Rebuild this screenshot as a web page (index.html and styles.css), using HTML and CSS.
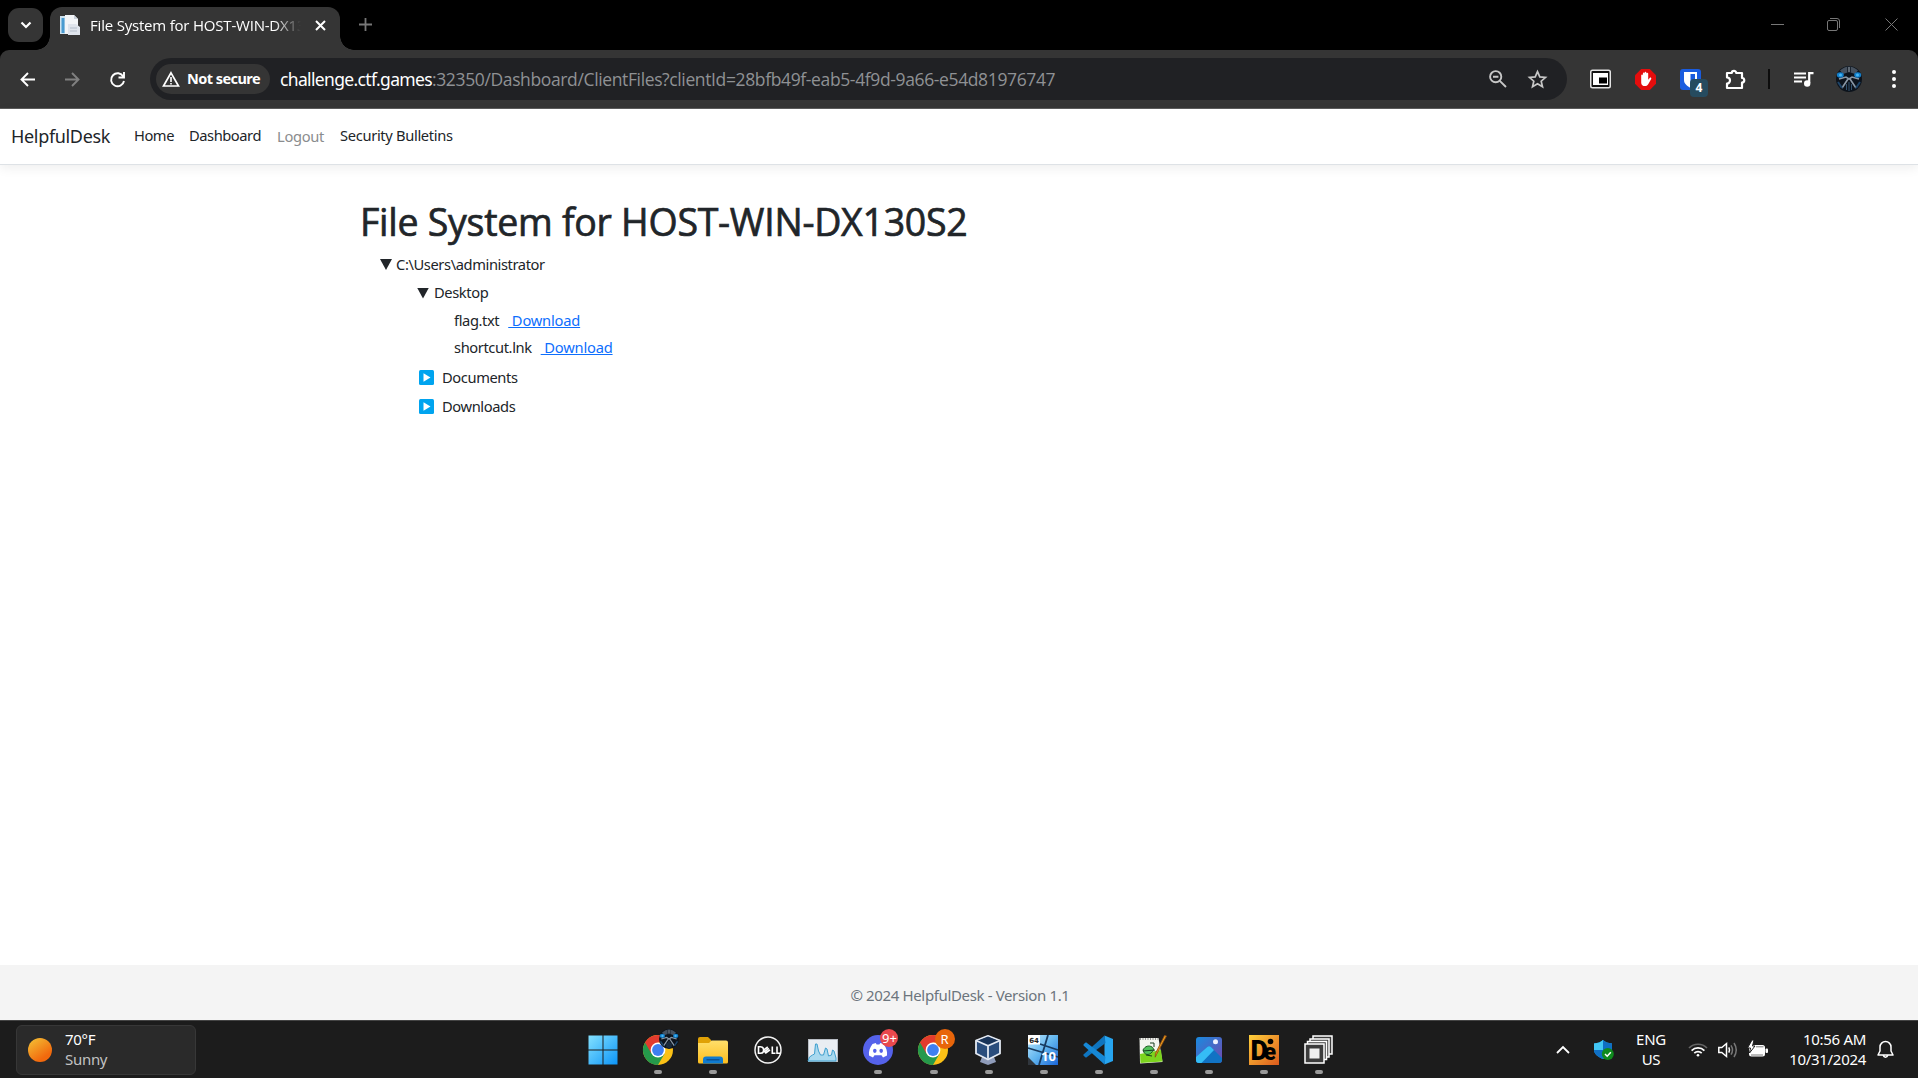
FILE: index.html
```html
<!DOCTYPE html>
<html lang="en">
<head>
<meta charset="utf-8">
<title>File System for HOST-WIN-DX130S2</title>
<link rel="stylesheet" href="styles.css">
</head>
<body>
<header class="tabstrip">
  <button class="tab-search"><svg width="12" height="8" viewBox="0 0 12 8"><path d="M1.500 1.500 6 6l4.500-4.500" fill="none" stroke="#fff" stroke-width="2.200"/></svg></button>
  <div class="tab">
    <svg class="favicon" width="20" height="20" viewBox="0 0 20 20"><path d="M0 1h5v18H0z" fill="#cfe3ef"/><path d="M1.500 3h3v15h-3z" fill="#4a9bd0"/><path d="M5 0h9l4 4v15H5z" fill="#f3f5f8"/><path d="M14 0l4 4h-4z" fill="#c8d0da"/><path d="M8 9h8l4 3v8H8z" fill="#dfe4ec"/><path d="M10 13h7M10 16h7" stroke="#b3bdca"/></svg>
    <span class="tab-title">File System for HOST-WIN-DX130S2</span>
    <svg class="tab-close" width="11" height="11" viewBox="0 0 11 11"><path d="M1 1l9 9M10 1l-9 9" stroke="#fff" stroke-width="2"/></svg>
  </div>
  <svg class="new-tab" width="13" height="13" viewBox="0 0 13 13"><path d="M6.500 0v13M0 6.500h13" stroke="#777" stroke-width="1.800"/></svg>
  <div class="window-controls">
    <svg width="13" height="13" viewBox="0 0 13 13"><path d="M0 6.500h13" stroke="#777"/></svg>
    <svg width="13" height="13" viewBox="0 0 13 13" fill="none" stroke="#777"><rect x=".5" y="2.500" width="10" height="10" rx="1.500"/><path d="M3 .5h7a2.500 2.500 0 0 1 2.500 2.500v7"/></svg>
    <svg width="13" height="13" viewBox="0 0 13 13"><path d="M.5.5l12 12M12.500.5l-12 12" stroke="#777"/></svg>
  </div>
</header>
<div class="toolbar">
  <div class="nav-buttons">
    <svg width="15" height="15" viewBox="0 0 15 15" fill="none" stroke="#fff" stroke-width="1.900"><path d="M15 7.500H1.500M8 1L1.500 7.500 8 14"/></svg>
    <svg width="15" height="15" viewBox="0 0 15 15" fill="none" stroke="#808080" stroke-width="1.900"><path d="M0 7.500h13.500M7 1l6.500 6.500L7 14"/></svg>
    <svg width="15" height="15" viewBox="0 0 15 15" fill="none" stroke="#fff" stroke-width="1.900"><path d="M13.300 4.600A6.500 6.500 0 1 0 14 9M14 0v5.500H8.500"/></svg>
  </div>
  <div class="omnibox">
    <div class="security-chip">
      <svg width="18" height="16" viewBox="0 0 18 16"><path d="M9 1.800L16.500 15h-15z" fill="none" stroke="#fff" stroke-width="1.700"/><path d="M9 6v5M9 12v1.600" stroke="#fff" stroke-width="1.600"/></svg>
      <span class="chip-text">Not secure</span>
    </div>
    <span class="url-host">challenge.ctf.games</span><span class="url-path">:32350/Dashboard/ClientFiles?clientId=28bfb49f-eab5-4f9d-9a66-e54d81976747</span>
    <div class="omnibox-actions">
      <svg width="18" height="18" viewBox="0 0 18 18" fill="none" stroke="#c7c7c7" stroke-width="1.900"><circle cx="6.700" cy="6.700" r="5.600"/><path d="M10.800 10.800L17 17M4 6.700h5.400"/></svg>
      <svg width="19" height="18" viewBox="0 0 19 18"><path d="M9.500 1.600l2.300 5.300 5.700.5-4.300 3.800 1.300 5.600-5-3-5 3 1.300-5.600L1.500 7.400l5.700-.5z" fill="none" stroke="#c7c7c7" stroke-width="1.700"/></svg>
    </div>
  </div>
  <div class="extensions">
    <svg width="21" height="20" viewBox="0 0 21 20"><rect x="0" y="0.500" width="21" height="19" rx="2.500" fill="#e4e4e4"/><rect x="1.500" y="2" width="18" height="16" rx="1" fill="#111"/><rect x="3" y="4" width="15" height="12" fill="#fff"/><rect x="9" y="8.500" width="8" height="6" fill="#000"/></svg>
    <svg width="21" height="21" viewBox="0 0 21 21"><path d="M6.200 0h8.600L21 6.200v8.600L14.800 21H6.200L0 14.800V6.200z" fill="#e40d0d"/><path d="M6.200 6.500c0-1.200 1.700-1.200 1.700 0V4.500c0-1.200 1.700-1.200 1.700 0V3.700c0-1.200 1.800-1.200 1.800 0v.9c0-1.200 1.800-1.200 1.800 0v6.200l1.500-1.900c.8-.8 2 0 1.500 1l-3 5.300c-1.500 2.800-7 2.500-7-1.500z" fill="#fff"/></svg>
    <div class="vault">
      <svg width="21" height="21" viewBox="0 0 21 21"><rect width="21" height="21" rx="3" fill="#1a5cdf"/><path d="M4 3h13v8c0 4-3.500 6.300-6.500 8C7.500 17.300 4 15 4 11z" fill="#fff"/><path d="M10.500 5H15v6c0 2.500-2.200 4.300-4.500 5.700z" fill="#1a5cdf"/></svg>
      <span class="vault-count">4</span>
    </div>
    <svg class="puzzle" width="21" height="21" viewBox="0 0 21 21"><path d="M2 4h4.800a2 2 0 0 1 4.400 0H17v5a2 2 0 0 1 0 4.500V19H2v-4.500a2.800 2.800 0 0 0 0-6z" fill="none" stroke="#fff" stroke-width="2.200" stroke-linejoin="round"/></svg>
    <i class="divider"></i>
    <svg class="media" width="20" height="15" viewBox="0 0 20 15"><path d="M0 1.500h12M0 5.500h12M0 9.500h8" stroke="#fff" stroke-width="2"/><path d="M15.200 11V1.200H19.500" fill="none" stroke="#fff" stroke-width="2.200"/><circle cx="13.200" cy="11.500" r="3.200" fill="#fff"/></svg>
    <svg class="avatar" width="26" height="26" viewBox="0 0 26 26"><use href="#pilot"/></svg>
    <svg class="more" width="4" height="18" viewBox="0 0 4 18" fill="#fff"><circle cx="2" cy="2" r="2"/><circle cx="2" cy="9" r="2"/><circle cx="2" cy="16" r="2"/></svg>
  </div>
</div>
<nav class="site-nav">
  <a class="brand">HelpfulDesk</a>
  <a class="link home">Home</a>
  <a class="link dash">Dashboard</a>
  <a class="link logout">Logout</a>
  <a class="link bulletins">Security Bulletins</a>
</nav>
<main>
  <h1>File System for HOST-WIN-DX130S2</h1>
  <ul class="tree">
    <li class="row root"><i class="open"></i><span>C:\Users\administrator</span></li>
    <li class="row folder"><i class="open"></i><span>Desktop</span></li>
    <li class="row file"><span>flag.txt</span><a class="download">&nbsp;Download</a></li>
    <li class="row file last"><span>shortcut.lnk</span><a class="download">&nbsp;Download</a></li>
    <li class="row closed"><svg width="15" height="15" viewBox="0 0 15 15"><rect width="15" height="15" rx="1.500" fill="#00a4ef"/><path d="M4.500 3.200v8.600L11.500 7.500z" fill="#fff"/></svg><span>Documents</span></li>
    <li class="row closed"><svg width="15" height="15" viewBox="0 0 15 15"><rect width="15" height="15" rx="1.500" fill="#00a4ef"/><path d="M4.500 3.200v8.600L11.500 7.500z" fill="#fff"/></svg><span>Downloads</span></li>
  </ul>
</main>
<footer class="site-footer">© 2024 HelpfulDesk - Version 1.1</footer>
<div class="taskbar">
  <div class="weather">
    <i class="sun"></i>
    <div class="weather-text"><span>70°F</span><span class="sky">Sunny</span></div>
  </div>
  <div class="apps">
    <div class="app"><svg width="30" height="30" viewBox="0 0 30 30" fill="url(#win)"><path d="M.5.5h14v14H.5zM15.500.5h14v14h-14zM.5 15.500h14v14H.5zM15.500 15.500h14v14h-14z"/></svg></div>
    <div class="app running"><svg width="30" height="30" viewBox="0 0 30 30"><use href="#chrome"/></svg><svg class="badge" width="20" height="20" viewBox="0 0 26 26"><use href="#pilot"/></svg></div>
    <div class="app running"><svg width="30" height="30" viewBox="0 0 30 30"><path d="M0 4a2 2 0 0 1 2-2h8l3 3v6H0z" fill="#e0a106"/><path d="M0 8l11 0 2.500-2.500H28a2 2 0 0 1 2 2V27a1.500 1.500 0 0 1-1.500 1.500h-27A1.500 1.500 0 0 1 0 27z" fill="url(#folder)"/><path d="M5 28.500v-4a3 3 0 0 1 3-3h14a3 3 0 0 1 3 3v4z" fill="#0f7bd0"/><path d="M8.500 24.800h13" stroke="#0a4a86" stroke-width="1.200"/></svg></div>
    <div class="app"><svg width="30" height="30" viewBox="0 0 30 30"><circle cx="15" cy="15" r="13" fill="none" stroke="#f2f2f2" stroke-width="1.500"/><g fill="none" stroke="#fff" stroke-width="1.600"><path d="M5.500 11.700v6.600h1.800a3.300 3.300 0 0 0 0-6.600zM19.300 11.500v6.800h3.200M24 11.500v6.800h3"/><path d="M10.500 15.200l4.300-3.200M11.600 16.600l4.300-3.200M12.600 18l4.400-3.200M10.500 15l2.500 3.200"/></g></svg></div>
    <div class="app"><svg width="30" height="24" viewBox="0 0 30 24"><rect x=".5" y="1.500" width="29" height="22" fill="#e9edf2" stroke="#b9bec5"/><path d="M1.500 19l3-2 2-1 1-10 1.500 0 1.500 7 2 4 3 0 2-7 1.500 1 1.500 7 3-1 1-5 1.500 1 2 7v3h-28z" fill="#a9d9ef" stroke="#3f9fce"/></svg></div>
    <div class="app running"><svg width="30" height="30" viewBox="0 0 30 30"><circle cx="15" cy="15" r="15" fill="#5562ea"/><path d="M9.500 9l3.300-1 .8 1.500h2.800l.8-1.500 3.300 1c2.800 3.500 4 7.500 3.500 11.500l-4 2-1.500-2.300h-7L10 22.500l-4-2C5.500 16.500 6.800 12.500 9.500 9z" fill="#fff"/><ellipse cx="11.800" cy="15.800" rx="1.800" ry="2.100" fill="#5562ea"/><ellipse cx="18.200" cy="15.800" rx="1.800" ry="2.100" fill="#5562ea"/></svg><span class="badge count">9+</span></div>
    <div class="app running"><svg width="30" height="30" viewBox="0 0 30 30"><use href="#chrome"/></svg><span class="badge profile">R</span></div>
    <div class="app running"><svg width="26" height="30" viewBox="0 0 26 30"><path d="M7 22h12l2 5-8 3-8-3z" fill="#8f9cba"/><path d="M13 .8L25 5.500V18.500L13 24.500 1 18.500V5.500z" fill="#2a4d7c" stroke="#e3e9f2" stroke-width="1.800" stroke-linejoin="round"/><path d="M2 6l11 5 11-5L13 1.500z" fill="#183358"/><path d="M1 5.500l12 5.300 12-5.300M13 10.800v13" fill="none" stroke="#e3e9f2" stroke-width="1.800"/></svg></div>
    <div class="app running"><svg width="30" height="30" viewBox="0 0 30 30"><rect width="30" height="30" fill="url(#glass)"/><path d="M0 13L30 22M20 0L11 30M12 9l18 6" stroke="#183b60" stroke-width="1.800"/><path d="M0 22l8 8H0z" fill="#30363d"/><rect width="12" height="9.500" fill="#fff"/><text x="1.200" y="8" class="vm-bits">64</text><text x="13" y="25.500" class="vm-ver">10</text></svg></div>
    <div class="app running"><svg width="30" height="30" viewBox="0 0 30 30"><path d="M21.500.5L30 4v22l-8.500 3.500z" fill="#27a5f0"/><path d="M21.500.5L.8 19.200a1.300 1.300 0 0 0 0 1.800l2.200 1.800L22.500 8z" fill="#0f75bf"/><path d="M21.500 29.500L.8 10.800a1.300 1.300 0 0 1 0-1.800L3 7.200 22.500 22z" fill="#1688d6"/></svg></div>
    <div class="app running"><svg width="30" height="30" viewBox="0 0 30 30"><path d="M1.500 3h19l4 24-22.500 1.500z" fill="#f4f6ef"/><path d="M2 19l21-4 1.500 11.500L2.500 28z" fill="#7cd41e"/><path d="M2 4h18" stroke="#999" stroke-width="2" stroke-dasharray="1 1.500"/><path d="M5 15c2-4 6-5 9-3 2 1 2 4 0 5-3 4-8 3-9-2z" fill="#52c25a" stroke="#1d5a22"/><path d="M5 16l12-1M12 8h4v4M8 20l6 1" stroke="#173d1c" fill="none"/><path d="M28.500 1L18.500 19.500l-1.300 2.700.2-3.600L26.500.500z" fill="#e99b1c" stroke="#8c4a13" stroke-width=".8"/></svg></div>
    <div class="app running"><svg width="26" height="26" viewBox="0 0 26 26"><rect width="26" height="26" rx="3" fill="url(#photo)"/><path d="M0 21L11 10.300a3 3 0 0 1 4.200 0L26 21v2a3 3 0 0 1-3 3H3a3 3 0 0 1-3-3z" fill="#1173c4"/><path d="M0 20L11 10.200a3 3 0 0 1 4.200 0L18 13 5.500 26H3a3 3 0 0 1-3-3z" fill="#35bdf5"/><circle cx="19.500" cy="4.800" r="2.500" fill="#eef2ff"/></svg></div>
    <div class="app running"><svg width="30" height="30" viewBox="0 0 30 30"><rect width="30" height="30" fill="url(#de)"/><text x="1.500" y="25" class="de-big">D</text><text x="14.500" y="25" class="de-small">e</text><circle cx="21.500" cy="6.500" r="2.800"/></svg></div>
    <div class="app running"><svg width="30" height="30" viewBox="0 0 30 30" fill="#3c3c3c" stroke="#fff" stroke-width="1.500"><rect x="9" y="1" width="19" height="18"/><rect x="6" y="4" width="19" height="18"/><rect x="3.500" y="6.500" width="19" height="18"/><rect x="1" y="9" width="19" height="19"/><rect x="5.500" y="13.500" width="10" height="10" fill="#f0f0f0" stroke="none"/></svg></div>
  </div>
  <div class="tray">
    <svg width="14" height="9" viewBox="0 0 14 9"><path d="M1 8l6-6 6 6" fill="none" stroke="#fff" stroke-width="1.800"/></svg>
    <svg class="shield" width="20" height="20" viewBox="0 0 20 20"><path d="M0 3.500Q6 3 9 0q3 3 9 3.500V10c0 4-4 7-9 9-5-2-9-5-9-9z" fill="#1fa3e6"/><path d="M0 10h9v9c-5-2-9-5-9-9zM9 0q3 3 9 3.500V10H9z" fill="#0f6fc4"/><path d="M0 3.500Q6 3 9 0v10H0z" fill="#42c6f4"/><circle cx="13.800" cy="14" r="6" fill="#0f8a1d"/><path d="M11 14l2.200 2.200 3.600-4" fill="none" stroke="#fff" stroke-width="1.500"/></svg>
    <div class="lang"><span>ENG</span><span>US</span></div>
    <div class="status">
      <svg width="20" height="15" viewBox="0 0 20 15" fill="none" stroke="#fff" stroke-width="1.700"><path d="M1 6a12.700 12.700 0 0 1 18 0" stroke="#666"/><path d="M3.600 8.600a9 9 0 0 1 12.800 0M6.300 11.200a5.200 5.200 0 0 1 7.400 0"/><circle cx="10" cy="13.200" r="1.300" fill="#fff" stroke="none"/></svg>
      <svg width="20" height="16" viewBox="0 0 20 16" fill="none" stroke="#fff" stroke-width="1.500"><path d="M.8 5.500v5h3L8.500 14.500v-13L3.800 5.500z"/><path d="M10.800 5.300q1.500 2.700 0 5.400"/><path d="M13 3.300q3 4.700 0 9.400M16 1q4.500 7 0 14" stroke="#777"/></svg>
      <svg width="20" height="17" viewBox="0 0 20 17"><rect x="1" y="4" width="16" height="11.500" rx="2.500" fill="#fff"/><rect x="17.500" y="7.500" width="2.500" height="4.500" rx="1" fill="#fff"/><path d="M4-1L-.5 7h3L1.500 12 7 5H4.500L6-1z" fill="#fff" stroke="#1c1c1c"/><path d="M8 5.800h7.500M3 14h12" stroke="#1c1c1c" stroke-width=".6"/></svg>
    </div>
    <div class="clock"><span>10:56 AM</span><span>10/31/2024</span></div>
    <svg class="bell" width="17" height="19" viewBox="0 0 17 19" fill="none" stroke="#fff" stroke-width="1.500"><path d="M3 11V7a5.500 5.500 0 0 1 11 0v4l2 4H1zM6.300 15.500a2.300 2.300 0 0 0 4.400 0" stroke-linejoin="round"/></svg>
  </div>
</div>
<svg class="defs" width="0" height="0">
  <defs>
    <linearGradient id="win" x1="0" y1="0" x2="30" y2="30" gradientUnits="userSpaceOnUse"><stop offset="0" stop-color="#86e3ff"/><stop offset="1" stop-color="#0a93f7"/></linearGradient>
    <linearGradient id="folder" x1="0" y1="0" x2="0" y2="1"><stop offset="0" stop-color="#ffdf6b"/><stop offset="1" stop-color="#fcbd1e"/></linearGradient>
    <linearGradient id="glass" x1="0" y1="0" x2="1" y2="1"><stop offset="0" stop-color="#c3e9ff"/><stop offset=".5" stop-color="#62b6ef"/><stop offset="1" stop-color="#1b66d8"/></linearGradient>
    <linearGradient id="photo" x1="0" y1="0" x2="1" y2="1"><stop offset="0" stop-color="#188be0"/><stop offset="1" stop-color="#7448ae"/></linearGradient>
    <linearGradient id="de" x1="0" y1="0" x2="1" y2="1"><stop offset="0" stop-color="#ffd13b"/><stop offset="1" stop-color="#dc5a1d"/></linearGradient>
    <g id="chrome"><circle cx="15" cy="15" r="15" fill="#fbc116"/><path d="M2 7.500A15 15 0 0 0 15 30L21.500 18.800 15 15z" fill="#25994b"/><path d="M2 7.500A15 15 0 0 1 28 7.500H15L8.500 18.800z" fill="#e33b2e"/><circle cx="15" cy="15" r="7.400" fill="#fff"/><circle cx="15" cy="15" r="5.900" fill="#3f7ff0"/></g>
    <g id="pilot"><circle cx="13" cy="13" r="13" fill="#0c131c"/><path d="M4 4.500Q13-3.500 22 4.500L19 8 13 6 7 8z" fill="#47525f"/><path d="M11 0h4v7h-4z" fill="#1b242f"/><path d="M13 1v5" stroke="#a5b0bb"/><path d="M3 13l7-2 3 2 3-2 7 2M12 13L6 22M14 13l6 9" fill="none" stroke="#8b98a6" stroke-width="1.600"/><path d="M10.500 18v6M13 16v9M15.500 18v6" stroke="#31506c"/><path d="M2 16l4 6M24 16l-4 6" stroke="#1d4468" stroke-width="2"/><ellipse cx="4.300" cy="9" rx="3.500" ry="2.700" fill="#147ec9"/><ellipse cx="21.700" cy="9" rx="3.500" ry="2.700" fill="#147ec9"/><circle cx="4.500" cy="9" r="1.500" fill="#45b7f4"/><circle cx="21.500" cy="9" r="1.500" fill="#45b7f4"/></g>
  </defs>
</svg>
</body>
</html>
```
FILE: styles.css
```css
* { box-sizing: border-box; }
body { margin: 0; width: 1918px; height: 1078px; overflow: hidden; display: flex; flex-direction: column; background: linear-gradient(#000 70px, #fff 70px); color: #212529; font-family: "Noto Sans", "Open Sans", sans-serif; font-size: 15px; }
svg { display: block; flex: none; overflow: visible; }
span, a { white-space: nowrap; }
.defs { position: absolute; }

.tabstrip { height: 50px; flex: none; background: #000; display: flex; align-items: flex-start; padding-left: 8px; }
.tab-search { width: 35px; height: 34px; margin: 8px 7px 0 0; padding: 0; border: 0; border-radius: 11px; background: #353535; display: flex; align-items: center; justify-content: center; }
.tab { position: relative; width: 290px; height: 43px; margin-top: 7px; background: #353535; border-radius: 12px 12px 0 0; display: flex; align-items: center; padding: 0 10px 7px; }
.tab::before, .tab::after { content: ""; position: absolute; bottom: 0; width: 14px; height: 14px; }
.tab::before { left: -14px; background: radial-gradient(circle at 0 0, transparent 13.500px, #353535 14px); }
.tab::after { right: -14px; background: radial-gradient(circle at 100% 0, transparent 13.500px, #353535 14px); }
.tab-title { width: 211px; margin: -1px 0 0 10px; overflow: hidden; color: #fff; font: 15px/20px "Open Sans", sans-serif; letter-spacing: -.2px; -webkit-mask-image: linear-gradient(90deg, #000 184px, transparent 211px); mask-image: linear-gradient(90deg, #000 184px, transparent 211px); }
.tab-close { margin-left: 14px; }
.new-tab { margin: 18px 0 0 19px; }
.window-controls { margin: 18px 20px 0 auto; display: flex; gap: 43px; }
.window-controls svg:last-child { margin-left: 2px; }

.toolbar { height: 59px; flex: none; background: #353535; border-bottom: 1px solid #5c5c5c; border-radius: 9px 9px 0 0; display: flex; align-items: center; padding-left: 20px; }
.nav-buttons { display: flex; gap: 30px; margin-right: 25px; }
.omnibox { flex: none; width: 1417px; height: 42px; border-radius: 21px; background: #202124; display: flex; align-items: center; padding-left: 6px; }
.security-chip { width: 114px; height: 30px; border-radius: 15px; background: #353535; display: flex; align-items: center; gap: 7px; padding-left: 6px; margin-right: 10px; }
.chip-text { color: #fff; font-size: 14.500px; font-weight: 700; line-height: 20px; letter-spacing: -.56px; margin-top: -2px; }
.url-host { color: #fff; font-size: 17.500px; line-height: 24px; letter-spacing: -.65px; }
.url-path { color: #8f9194; font: 17.500px/24px "Open Sans", sans-serif; letter-spacing: -.37px; }
.omnibox-actions { margin: 0 20px 0 auto; display: flex; gap: 21px; }
.extensions { flex: 1; display: flex; align-items: center; padding-left: 23px; }
.extensions > * { margin-right: 24px; }
.vault { position: relative; }
.vault-count { position: absolute; left: 10px; top: 10px; width: 18px; height: 18px; border-radius: 4px; background: #264b5f; color: #fff; font: 700 12px/18px "Noto Sans", sans-serif; text-align: center; }
.extensions .puzzle { margin-right: 23px; }
.divider { width: 2px; height: 20px; background: #0c0c0c; margin-left: -1px; }
.extensions .media { margin-right: 22px; }
.extensions .avatar { margin-right: 30px; }
.extensions .more { margin-right: 0; }

.site-nav { height: 56px; flex: none; background: #fff; border-bottom: 1px solid #dee2e6; box-shadow: 0 3px 11px rgba(0,0,0,.07); display: flex; align-items: center; padding-left: 11px; }
.brand { font-size: 18px; line-height: 24px; width: 123px; letter-spacing: -.33px; margin-top: -2px; }
.link { font-size: 14.700px; line-height: 20px; margin-top: -4px; letter-spacing: -.45px; }
.home { width: 55px; }
.dash { width: 88px; }
.logout { width: 63px; color: #8a8c8e; margin-top: -2px; letter-spacing: -.3px; }
.bulletins { letter-spacing: -.33px; }

main { flex: 1; padding: 34px 0 0 360px; }
h1 { margin: 0; height: 50px; font: 500 37.500px/45px "Open Sans", sans-serif; letter-spacing: -.27px; -webkit-text-stroke: .7px #212529; }
.tree { list-style: none; margin: 0; padding: 0; font-size: 14.700px; letter-spacing: -.4px; }
.row { height: 29px; display: flex; align-items: center; line-height: 20px; }
.root { padding-left: 20px; }
.folder { height: 28px; padding-left: 57px; }
.file { padding-left: 94px; height: 27px; }
.last { margin-bottom: 2px; }
.closed { padding-left: 59px; gap: 8px; }
.closed svg { margin-top: 2px; }
.open { width: 12px; height: 11px; margin: 2px 4px 0 0; background: #212529; clip-path: polygon(0 0, 100% 0, 50% 100%); }
.folder .open { margin-right: 5px; }
.download { color: #0d6efd; text-decoration: underline; margin-left: 9px; letter-spacing: -.2px; }
.site-footer { height: 55px; flex: none; background: #f4f4f4; color: #6c757d; text-align: center; padding: 20px 0 0 2px; line-height: 20px; letter-spacing: -.36px; }

.taskbar { height: 58px; flex: none; background: #1c1c1c; border-top: 1px solid #444; display: grid; grid-template-columns: 574px 770px 1fr; color: #fff; }
.weather { width: 180px; height: 50px; margin: 4px 0 0 16px; border: 1px solid #373737; border-radius: 6px; background: #2a2a2a; display: flex; align-items: center; padding-left: 11px; gap: 13px; }
.sun { width: 24px; height: 24px; border-radius: 50%; background: linear-gradient(145deg, #f3c537, #f2690d 75%); }
.weather-text, .lang, .clock { display: flex; flex-direction: column; line-height: 20px; letter-spacing: -.3px; margin-top: -2px; }
.sky { color: #c2c2c2; }
.apps { display: flex; padding-left: 1px; }
.app { flex: none; position: relative; width: 55.100px; height: 57px; display: flex; align-items: center; justify-content: center; }
.running::after { content: ""; position: absolute; left: 24px; top: 49px; width: 8px; height: 4px; border-radius: 2px; background: #9a9a9a; }
.badge { position: absolute; left: 29px; top: 8px; width: 20px; height: 20px; border-radius: 50%; color: #fff; text-align: center; font: 13px/20px "Noto Sans", sans-serif; }
.count { left: 30px; width: 18px; height: 18px; line-height: 18px; background: #e9484d; }
.profile { background: #e8650a; }
.vm-bits { font: 700 7px "DejaVu Sans", sans-serif; fill: #222; }
.vm-ver { font: 700 13px "Noto Sans", sans-serif; fill: #fff; }
.de-big { font: 900 27px Roboto, sans-serif; }
.de-small { font: 900 23px Roboto, sans-serif; }
.tray { display: flex; align-items: center; padding-left: 212px; }
.shield { margin-left: 24px; }
.lang { width: 30px; margin-left: 22px; align-items: center; }
.status { display: flex; gap: 10px; align-items: center; margin-left: 22px; }
.clock { width: 98px; align-items: flex-end; }
.bell { margin-left: 11px; }
```
